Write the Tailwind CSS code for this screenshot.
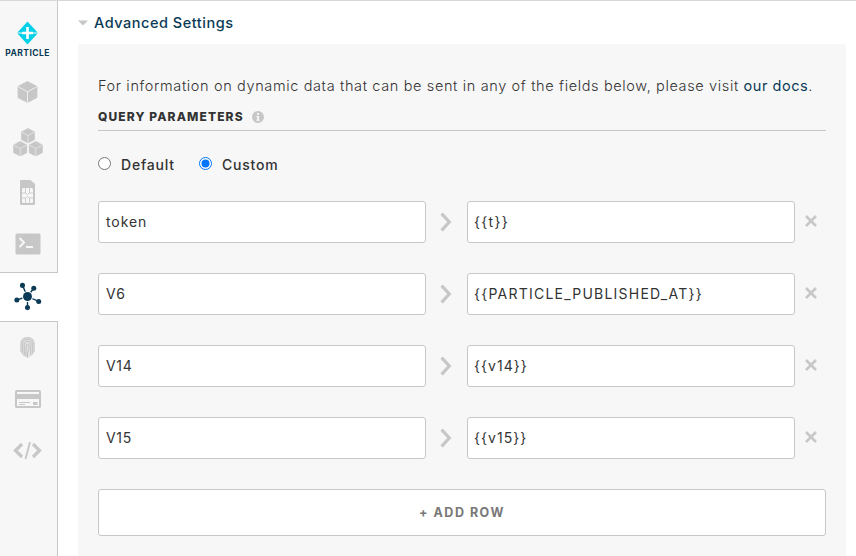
<!DOCTYPE html>
<html lang="en">
<head>
<meta charset="utf-8">
<title>Advanced Settings</title>
<script src="https://cdn.jsdelivr.net/npm/@tailwindcss/browser@4"></script>
</head>
<body class="bg-white font-['Inter',sans-serif] text-[#333]">
<svg class="hidden">
  <symbol id="cube" viewBox="0 0 20 22">
    <path fill="#c7c7c7" stroke="#c7c7c7" stroke-linejoin="round" d="M10 .6 19.4 5.500V16.500L10 21.400.6 16.500V5.500Z"/>
    <path fill="none" stroke="#f7f7f7" stroke-width=".8" d="M.8 5.800 10 10.800 19.200 5.800M10 10.800V21.500"/>
  </symbol>
  <symbol id="chevron" viewBox="0 0 12 20"><path fill="none" stroke="#c7c7c7" stroke-width="3.200" d="M1.600 1.600 9.300 10 1.600 18.400"/></symbol>
  <symbol id="close" viewBox="0 0 12 12"><path fill="none" stroke="#c7c7c7" stroke-width="2.600" d="M1 1 11 11M11 1 1 11"/></symbol>
</svg>
<div class="flex h-[556px] w-[856px] overflow-hidden border-t border-[#d8d8d8]">
  <nav class="flex w-[58px] shrink-0 flex-col bg-[#f7f7f7] text-[#c7c7c7]">
    <div class="flex h-[66px] flex-col items-center border-r border-[#c7c7c7] pt-5 pr-[2px]">
      <svg class="h-[24px] w-[23px] shrink-0" viewBox="0 0 22 24"><path fill="#00d1e8" d="M11 .5 21.500 12 11 23.500.5 12Z"/><path stroke="#f7f7f7" stroke-width="1" d="M0 12H22"/><path stroke="#fff" stroke-width="2.600" d="M11 6V18M5.500 12H16.500"/></svg>
      <span class="mt-[3px] text-[8.500px] leading-[10px] font-bold tracking-[0.45px] text-[#0a3a56]">PARTICLE</span>
    </div>
    <div class="flex h-[50px] items-center justify-center border-r border-[#c7c7c7] pr-[2px]"><svg class="h-[22px] w-[21px]"><use href="#cube"/></svg></div>
    <div class="flex h-[50px] items-center justify-center border-r border-[#c7c7c7] pr-[2px]">
      <svg class="h-[29px] w-[30px]" viewBox="0 0 30 29"><use href="#cube" x="8" y="0" width="14" height="15.500"/><use href="#cube" x="0" y="13" width="14.500" height="15.500"/><use href="#cube" x="15.500" y="13" width="14.500" height="15.500"/></svg>
    </div>
    <div class="flex h-[50px] items-center justify-center border-r border-[#c7c7c7] pr-[2px]">
      <svg class="h-[25px] w-[15px]" viewBox="0 0 15 25"><path fill="#c7c7c7" d="M1 0H10.500L15 4V24Q15 25 14 25H1Q0 25 0 24V1Q0 0 1 0Z"/><rect x="2" y="8" width="11" height="15" rx="1.500" fill="#f7f7f7"/><path stroke="#c7c7c7" stroke-width=".9" fill="none" d="M2 13H5.500L7.500 14.500 9.500 13H13M2 18H5.500L7.500 16.500 9.500 18H13M5.500 8V13M9.500 8V13M5.500 18V23M9.500 18V23"/></svg>
    </div>
    <div class="flex h-[55px] items-center justify-center border-r border-[#c7c7c7] pr-[2px] pb-[1px]">
      <svg class="h-[22px] w-[26px]" viewBox="0 0 26 22"><rect x=".5" y=".5" width="25" height="21" rx="1.500" fill="#c7c7c7"/><path fill="none" stroke="#f7f7f7" stroke-width="2" d="M4.500 5 9 9.500 4.500 14M11 14H18"/></svg>
    </div>
    <div class="flex h-[50px] items-center justify-center border-y border-[#c7c7c7] bg-white pr-[3px] pb-[1px]">
      <svg class="h-[29px] w-[29px]" viewBox="0 0 30 30" fill="#0a3a56"><path stroke="#0a3a56" stroke-width="1.400" d="M15 15 10 4M15 15 21.500 6.500M15 15 4 18.500M15 15 26.500 20M15 15V26"/><circle cx="15" cy="15" r="5.600" fill="#fff"/><circle cx="15" cy="15" r="4.600"/><circle cx="9.800" cy="3.500" r="2.600"/><circle cx="21.500" cy="6.500" r="2.600"/><circle cx="4" cy="18.700" r="2.600"/><circle cx="26.600" cy="20.200" r="2.600"/><circle cx="15" cy="26.500" r="2.600"/></svg>
    </div>
    <div class="flex h-[51px] items-center justify-center border-r border-[#c7c7c7] pr-[2px]">
      <svg class="h-[23px] w-[15px]" viewBox="0 0 16 23"><path fill="#e2e2e2" d="M.5 8Q.5 .3 8 .3T15.500 8V15Q15.500 20 8 22.700.5 20 .5 15Z"/><path fill="none" stroke="#bdbdbd" stroke-width=".9" d="M1 16V8Q1 1 8 1T15 8V16M2.800 18V8Q2.800 2.800 8 2.800T13.200 8V18M4.600 20V8.500Q4.600 4.700 8 4.700T11.400 8.500V19.500M6.300 21V15L7 9Q8 6 9.300 9V14L8 17V22"/></svg>
    </div>
    <div class="flex h-[51px] items-center justify-center border-r border-[#c7c7c7] pr-[1px]">
      <svg class="h-[18px] w-[26px]" viewBox="0 0 26 18"><rect x="1" y="1" width="24" height="16" rx=".6" fill="none" stroke="#c7c7c7" stroke-width="2"/><path fill="#c7c7c7" d="M1 4H25V9H1ZM18 12H22.500V15H18Z"/><path stroke="#c7c7c7" d="M4 12.500H15M4 14.500H10"/></svg>
    </div>
    <div class="flex grow items-start justify-center border-r border-[#c7c7c7] pt-[18px] pr-[2px]">
      <svg class="h-[17px] w-[29px]" viewBox="0 0 29 17"><path fill="none" stroke="#c7c7c7" stroke-width="3.200" d="M9 2 2.500 8.500 9 15M20 2 26.500 8.500 20 15"/><path stroke="#c7c7c7" stroke-width="1.900" d="M17 0 12.500 17"/></svg>
    </div>
  </nav>
  <main class="flex w-[798px] flex-col pr-[10px] pl-5">
    <h2 class="flex h-[43px] shrink-0 items-center text-[14.500px] font-medium tracking-[0.520px] text-[#0a3a56]">
      <svg class="mr-[6px] h-[6px] w-[10px]" viewBox="0 0 10 6"><path fill="#c7c7c7" d="M0 .5H10L5 5.500Z"/></svg><span>Advanced Settings</span>
    </h2>
    <section class="flex grow flex-col rounded-t-[3px] bg-[#f7f7f7] px-5 pt-8">
      <p class="h-[20px] text-[14.500px] leading-[20px] font-light tracking-[0.63px] whitespace-nowrap">For information on dynamic data that can be sent in any of the fields below, please visit <a class="font-normal tracking-[0.55px] text-[#0a3a56]">our docs</a>.</p>
      <div class="mt-[9px] flex h-[26px] items-start border-b border-[#c7c7c7]">
        <h3 class="text-[12px] leading-[24px] font-extrabold tracking-[1.120px]">QUERY PARAMETERS</h3>
        <svg class="mt-[6px] ml-[8px] h-[12px] w-[12px]" viewBox="0 0 12 12"><circle cx="6" cy="6" r="6" fill="#c7c7c7"/><path fill="#f7f7f7" d="M5 2H7V3.800H5ZM4.300 5H7V8.800H7.800V9.800H4.200V8.800H5.200V6H4.300Z"/></svg>
      </div>
      <div class="mt-[24px] flex h-5 text-[14px] leading-5 font-medium tracking-[0.78px]">
        <label class="flex w-[101px]"><svg class="mt-[2px] mr-[9px] h-[14px] w-[14px]" viewBox="0 0 14 14"><circle cx="6.500" cy="6.500" r="6" fill="#fff" stroke="#767676"/></svg><span>Default</span></label>
        <label class="flex"><svg class="mt-[2px] mr-[9px] h-[14px] w-[14px]" viewBox="0 0 14 14"><circle cx="6.500" cy="6.500" r="6" fill="#fff" stroke="#0075ff"/><circle cx="6.500" cy="6.500" r="4" fill="#0075ff"/></svg><span>Custom</span></label>
      </div>
      <div class="mt-[26px] flex flex-col gap-[30px] text-[14px]">
        <div class="flex h-[42px] items-center"><div class="flex h-full w-[328px] items-center rounded-[3px] border border-[#c7c7c7] bg-white px-[7px] pb-[2px] tracking-[0.9px]"><span>token</span></div><svg class="mr-[15px] ml-[14px] h-[20px] w-[12px]"><use href="#chevron"/></svg><div class="flex h-full w-[328px] items-center rounded-[3px] border border-[#c7c7c7] bg-white px-[6px] pb-[2px] tracking-[1.300px]"><span>{{t}}</span></div><svg class="mb-[3px] ml-[10px] h-[12px] w-[12px]"><use href="#close"/></svg></div>
        <div class="flex h-[42px] items-center"><div class="flex h-full w-[328px] items-center rounded-[3px] border border-[#c7c7c7] bg-white px-[7px] pb-[2px] tracking-[0.8px]"><span>V6</span></div><svg class="mr-[15px] ml-[14px] h-[20px] w-[12px]"><use href="#chevron"/></svg><div class="flex h-full w-[328px] items-center rounded-[3px] border border-[#c7c7c7] bg-white px-[6px] pb-[2px] tracking-[1.230px]"><span>{{PARTICLE_PUBLISHED_AT}}</span></div><svg class="mb-[3px] ml-[10px] h-[12px] w-[12px]"><use href="#close"/></svg></div>
        <div class="flex h-[42px] items-center"><div class="flex h-full w-[328px] items-center rounded-[3px] border border-[#c7c7c7] bg-white px-[7px] pb-[2px] tracking-[0.7px]"><span>V14</span></div><svg class="mr-[15px] ml-[14px] h-[20px] w-[12px]"><use href="#chevron"/></svg><div class="flex h-full w-[328px] items-center rounded-[3px] border border-[#c7c7c7] bg-white px-[6px] pb-[2px] tracking-[1.050px]"><span>{{v14}}</span></div><svg class="mb-[3px] ml-[10px] h-[12px] w-[12px]"><use href="#close"/></svg></div>
        <div class="flex h-[42px] items-center"><div class="flex h-full w-[328px] items-center rounded-[3px] border border-[#c7c7c7] bg-white px-[7px] pb-[2px] tracking-[0.7px]"><span>V15</span></div><svg class="mr-[15px] ml-[14px] h-[20px] w-[12px]"><use href="#chevron"/></svg><div class="flex h-full w-[328px] items-center rounded-[3px] border border-[#c7c7c7] bg-white px-[6px] pb-[2px] tracking-[1.050px]"><span>{{v15}}</span></div><svg class="mb-[3px] ml-[10px] h-[12px] w-[12px]"><use href="#close"/></svg></div>
      </div>
      <button class="mt-[30px] h-[47px] shrink-0 rounded-[3px] border border-[#c7c7c7] bg-white pt-[2px] text-[12.500px] font-bold tracking-[1.500px] text-[#777]">+ ADD ROW</button>
    </section>
  </main>
</div>
</body>
</html>
